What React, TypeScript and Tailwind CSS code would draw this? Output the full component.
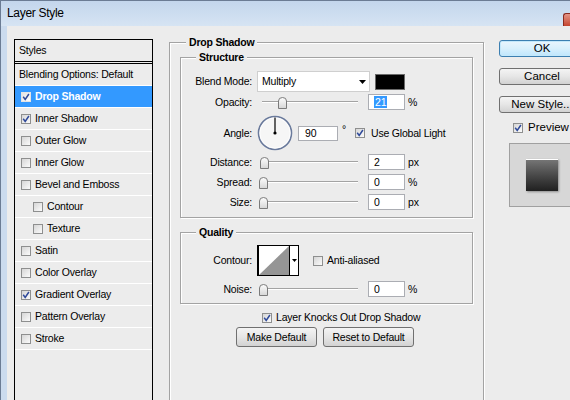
import React from 'react';

type Item = { label: string; on?: boolean; active?: boolean; indent?: boolean; nobox?: boolean };

const items: Item[] = [
  { label: 'Blending Options: Default', nobox: true },
  { label: 'Drop Shadow', on: true, active: true },
  { label: 'Inner Shadow', on: true },
  { label: 'Outer Glow' },
  { label: 'Inner Glow' },
  { label: 'Bevel and Emboss' },
  { label: 'Contour', indent: true },
  { label: 'Texture', indent: true },
  { label: 'Satin' },
  { label: 'Color Overlay' },
  { label: 'Gradient Overlay', on: true },
  { label: 'Pattern Overlay' },
  { label: 'Stroke' },
];

function Box({ on, light }: { on?: boolean; light?: boolean }) {
  return (
    <span
      className={
        light
          ? 'flex h-[10px] w-[10px] shrink-0 items-center justify-center border border-[#e4e4e4] bg-gradient-to-br from-[#e2e2e2] to-white'
          : 'flex h-[10px] w-[10px] shrink-0 items-center justify-center border border-[#8e8f8f] bg-gradient-to-br from-[#d6d6d6] to-[#fbfbfb]'
      }
    >
      {on && (
        <svg width="8" height="8" viewBox="0 0 8 8">
          <path d="M1.2 3.8 3.2 6.4 6.9 1" fill="none" stroke="#2f4a9a" strokeWidth="1.5" />
        </svg>
      )}
    </span>
  );
}

function Slider({ value }: { value: number }) {
  return (
    <div className="relative ml-[6px] h-[16px] w-[106px] shrink-0">
      <div className="absolute left-[4px] top-[7px] w-[96px] border-t border-b border-t-[#a3a3a3] border-b-white" />
      <svg className="absolute top-[3px]" style={{ left: 1 + value * 90 }} width="9" height="12" viewBox="0 0 9 12">
        <defs>
          <linearGradient id="thumb" x1="0" y1="0" x2="0" y2="1">
            <stop offset="0" stopColor="#fdfdfd" />
            <stop offset="1" stopColor="#d6d6d6" />
          </linearGradient>
        </defs>
        <path d="M0.5 11.5V4Q0.5 0.5 4.5 0.5Q8.5 0.5 8.5 4V11.5Z" fill="url(#thumb)" stroke="#7b7b7b" />
      </svg>
    </div>
  );
}

function Row({ label, className, children }: { label: string; className: string; children: React.ReactNode }) {
  return (
    <div className={`flex items-center ${className}`}>
      <span className="w-[71px] shrink-0 text-right">{label}</span>
      {children}
    </div>
  );
}

function SliderRow({ label, value, text, unit, className }: { label: string; value: number; text: React.ReactNode; unit: string; className: string }) {
  return (
    <Row label={label} className={className}>
      <Slider value={value} />
      <div className="ml-[4px] flex h-[16px] w-[37px] shrink-0 items-center border border-[#abadb3] bg-white pl-[5px]">{text}</div>
      <span className="ml-[3px]">{unit}</span>
    </Row>
  );
}

function Btn({ children, className }: { children: React.ReactNode; className: string }) {
  return (
    <div
      className={`flex shrink-0 items-center justify-center rounded-[3px] border border-[#707070] bg-gradient-to-b from-[#f4f4f4] via-[#e6e6e6] to-[#d2d2d2] ${className}`}
    >
      {children}
    </div>
  );
}

function Title({ children, className }: { children: React.ReactNode; className: string }) {
  return <div className={`-mt-[7px] w-fit bg-[#ececec] px-[3px] font-bold leading-[13px] ${className}`}>{children}</div>;
}

const frame = 'border border-[#a3a3a3] shadow-[inset_1px_1px_0_#fff,1px_1px_0_#fff]';

export default function App() {
  return (
    <div className="flex h-[400px] w-[570px] flex-col overflow-hidden border-l border-t border-[#6b7c94] bg-[#cbdbee] font-['Liberation_Sans',Arial,sans-serif] text-[10.5px] leading-[13px] tracking-[-0.2px] text-black">
      <div className="flex h-[25px] shrink-0 items-center bg-gradient-to-b from-[#c3d6ec] to-[#d6e4f3] pl-[6px]">
        <span className="text-[12px] tracking-[-0.3px]">Layer Style</span>
        <span className="ml-auto mt-[12px] h-[13px] w-[7px] self-start rounded-tl-[3px] border-l border-t border-[#8a2a1e] bg-gradient-to-b from-[#e39485] to-[#c4432e]" />
      </div>

      <div className="ml-[6px] flex flex-1 overflow-hidden bg-[#ececec]">
        {/* styles list */}
        <div className="ml-[7px] mt-[13px] h-[380px] w-[139px] shrink-0 border border-black">
          <div className="flex h-[24px] items-center border-b-[3px] border-double border-black pl-[4px]">Styles</div>
          {items.map((it) => (
            <div
              key={it.label}
              className={
                it.active
                  ? 'flex h-[22px] items-center gap-[4px] border-b border-white bg-[#3399ff] pl-[6px] font-bold text-white'
                  : it.indent
                    ? 'flex h-[22px] items-center gap-[4px] border-b border-white pl-[18px]'
                    : it.nobox
                      ? 'flex h-[22px] items-center border-b border-white pl-[4px]'
                      : 'flex h-[22px] items-center gap-[4px] border-b border-white pl-[6px]'
              }
            >
              {!it.nobox && <Box on={it.on} light={it.active} />}
              <span>{it.label}</span>
            </div>
          ))}
        </div>

        {/* drop shadow panel */}
        <div className={`ml-[16px] mt-[16px] h-[380px] w-[315px] shrink-0 ${frame}`}>
          <Title className="ml-[16px]">Drop Shadow</Title>

          <div className={`mx-[10px] mt-[8px] pb-[7px] ${frame}`}>
            <Title className="ml-[15px]">Structure</Title>
            <Row label="Blend Mode:" className="mt-[7px] h-[21px]">
              <div className="ml-[5px] flex h-[21px] w-[113px] shrink-0 items-center border border-[#cfcfcf] bg-white pl-[4px]">
                <span>Multiply</span>
                <svg className="ml-auto mr-[3px]" width="7" height="4" viewBox="0 0 7 4">
                  <path d="M0 0H7L3.5 4Z" fill="#000" />
                </svg>
              </div>
              <div className="ml-[5px] h-[16px] w-[30px] shrink-0 border border-[#6a6a6a] bg-black" />
            </Row>
            <SliderRow
              label="Opacity:"
              value={0.21}
              unit="%"
              className="mt-[2px] h-[16px]"
              text={<span className="bg-[#3399ff] px-[1px] leading-[12px] text-white">21</span>}
            />
            <Row label="Angle:" className="mt-[5px] h-[36px]">
              <svg className="ml-[5px] shrink-0" width="36" height="36" viewBox="0 0 36 36">
                <circle cx="18" cy="18" r="16.5" fill="#f6f6f6" stroke="#6a7a9c" strokeWidth="1.6" />
                <circle cx="18" cy="18" r="15.2" fill="none" stroke="#ffffff" strokeWidth="0.8" />
                <line x1="18" y1="18" x2="18" y2="2.5" stroke="#000" strokeWidth="1.2" />
                <circle cx="18" cy="18" r="1.6" fill="#000" />
              </svg>
              <div className="ml-[5px] flex h-[15px] w-[40px] shrink-0 items-center border border-[#abadb3] bg-white pl-[6px]">90</div>
              <span className="-mt-[8px] ml-[4px]">°</span>
              <span className="ml-[9px]">
                <Box on />
              </span>
              <span className="ml-[6px]">Use Global Light</span>
            </Row>
            <SliderRow label="Distance:" value={0.01} unit="px" text="2" className="mt-[3px] h-[16px]" />
            <SliderRow label="Spread:" value={0} unit="%" text="0" className="mt-[4px] h-[16px]" />
            <SliderRow label="Size:" value={0} unit="px" text="0" className="mt-[4px] h-[16px]" />
          </div>

          <div className={`mx-[10px] mt-[14px] pb-[6px] ${frame}`}>
            <Title className="ml-[15px]">Quality</Title>
            <Row label="Contour:" className="mt-[6px] h-[31px]">
              <svg className="ml-[5px] shrink-0" width="42" height="31" viewBox="0 0 42 31">
                <rect x="0.5" y="0.5" width="41" height="30" fill="#fff" stroke="#000" />
                <line x1="1.5" y1="0" x2="1.5" y2="31" stroke="#000" />
                <polygon points="2,30 32,1 32,30" fill="#959595" />
                <line x1="32.5" y1="0" x2="32.5" y2="31" stroke="#000" />
                <polygon points="35,14 40,14 37.5,17" fill="#000" />
              </svg>
              <span className="ml-[14px]">
                <Box />
              </span>
              <span className="ml-[4px]">Anti-aliased</span>
            </Row>
            <SliderRow label="Noise:" value={0} unit="%" text="0" className="mt-[5px] h-[16px]" />
          </div>

          <div className="ml-[92px] mt-[7px] flex h-[13px] items-center gap-[4px]">
            <Box on />
            <span>Layer Knocks Out Drop Shadow</span>
          </div>
          <div className="ml-[66px] mt-[3px] flex gap-[6px]">
            <Btn className="h-[20px] w-[81px]">Make Default</Btn>
            <Btn className="h-[20px] w-[91px]">Reset to Default</Btn>
          </div>
        </div>

        {/* right column */}
        <div className="ml-[15px] mt-[14px] flex w-[86px] shrink-0 flex-col text-[11.5px] tracking-normal">
          <div className="flex h-[17px] items-center justify-center rounded-[3px] border border-[#3c7fb1] bg-gradient-to-b from-[#eaf6fd] via-[#d9f0fc] to-[#bee6fd] shadow-[inset_0_0_0_1px_#c4e8fa]">
            OK
          </div>
          <Btn className="mt-[11px] h-[17px]">Cancel</Btn>
          <Btn className="mt-[11px] h-[17px] whitespace-nowrap">New Style...</Btn>
          <div className="mt-[8px] flex h-[13px] items-center gap-[5px] pl-[14px]">
            <Box on />
            <span>Preview</span>
          </div>
          <div className="ml-[10px] mt-[9px] flex h-[64px] w-[65px] items-center justify-center border border-[#a0a0a0] bg-[#d7d7d7]">
            <div className="h-[32px] w-[32px] border-t border-white bg-gradient-to-b from-[#757575] to-[#202020] shadow-[1px_1px_2px_rgba(0,0,0,0.35)]" />
          </div>
        </div>
      </div>
    </div>
  );
}
